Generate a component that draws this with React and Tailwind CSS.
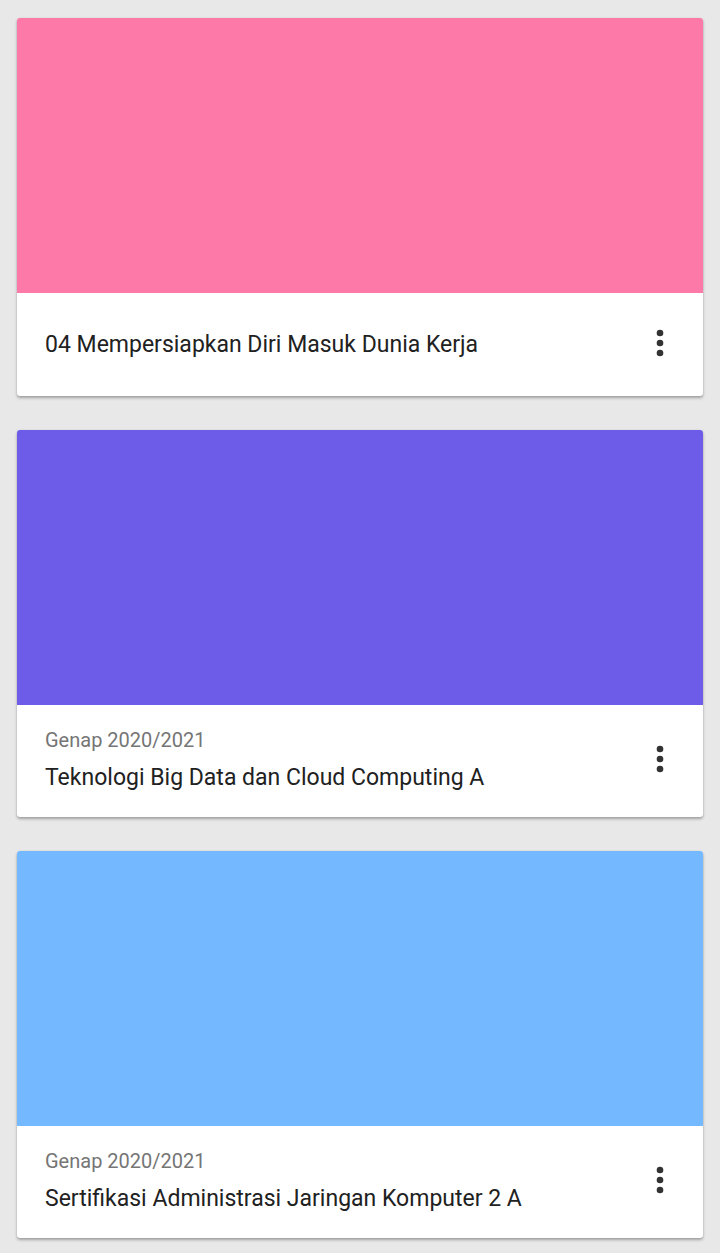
import React from "react";

const cards = [
  { color: "bg-[#fd79a8]", title: "04 Mempersiapkan Diri Masuk Dunia Kerja", sub: null },
  { color: "bg-[#6c5ce7]", title: "Teknologi Big Data dan Cloud Computing A", sub: "Genap 2020/2021" },
  { color: "bg-[#74b9ff]", title: "Sertifikasi Administrasi Jaringan Komputer 2 A", sub: "Genap 2020/2021" },
];

function MoreVert() {
  return (
    <svg width="40" height="40" viewBox="0 0 24 24" className="shrink-0 mb-[4px]">
      <circle cx="12" cy="6" r="2" fill="#333333" />
      <circle cx="12" cy="12" r="2" fill="#333333" />
      <circle cx="12" cy="18" r="2" fill="#333333" />
    </svg>
  );
}

export default function App() {
  return (
    <div
      className="min-h-[1253px] bg-[#e8e8e8] px-[17px] pt-[18px] flex flex-col gap-[34px]"
      style={{ fontFamily: "Roboto, 'Noto Sans', sans-serif" }}
    >
      {cards.map((c, i) => (
        <div
          key={i}
          className="bg-white rounded-[3px] overflow-hidden shadow-[0_2px_3px_rgba(0,0,0,0.3),0_0_2px_rgba(0,0,0,0.08)]"
        >
          <div className={`${c.color} h-[275px]`} />
          <div
            className={`flex items-center justify-between pl-[28px] pr-[23px] ${
              c.sub ? "h-[112px]" : "h-[103px]"
            }`}
          >
            <div className={`flex flex-col ${c.sub ? "mb-[3px]" : ""}`}>
              {c.sub && (
                <div className="text-[20px] leading-[28px] text-[#757575]">{c.sub}</div>
              )}
              <div className={`text-[23px] leading-[32px] text-[#212121] ${c.sub ? "mt-[8px]" : ""}`}>
                {c.title}
              </div>
            </div>
            <MoreVert />
          </div>
        </div>
      ))}
    </div>
  );
}
